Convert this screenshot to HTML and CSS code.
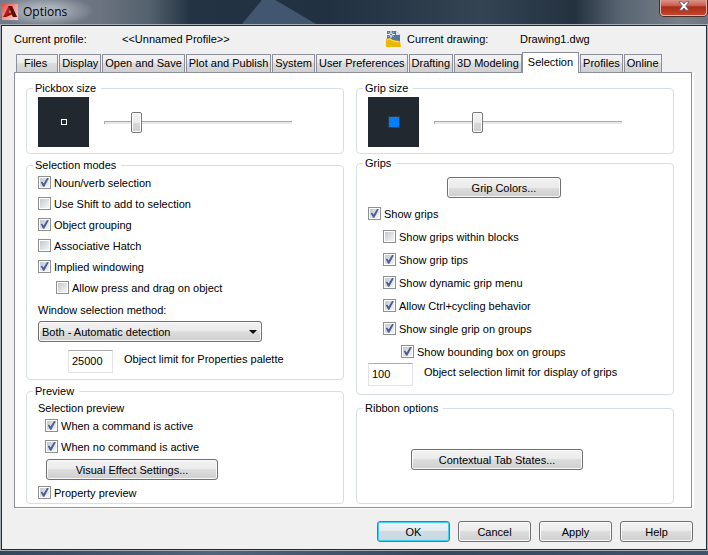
FILE: index.html
```html
<!DOCTYPE html>
<html lang="en">
<head>
<meta charset="utf-8">
<title>Options</title>
<link rel="stylesheet" href="styles.css">
</head>
<body>
<div class="window">
  <header class="titlebar">
    <svg class="logo" viewBox="0 0 16 16" aria-hidden="true">
      <defs><linearGradient id="lg" x1="0" y1="0" x2="1" y2="1"><stop offset="0" stop-color="#e04a44"/><stop offset=".5" stop-color="#f29a94"/><stop offset="1" stop-color="#f8d0cc"/></linearGradient></defs>
      <rect width="16" height="16" fill="url(#lg)"/>
      <path d="M1 13 6.500 2H10L15 13h-4l-1-2.500H5.500L4 13z" fill="#b0201a"/>
      <path d="M6.500 2H10L15 13h-4L8 6z" fill="#5c100c"/>
      <path d="M6.800 8.500 8 6l1 2.500z" fill="#e8a09a"/>
      <path d="M1 13l6-4 3 1.500L4 13z" fill="#8c1812"/>
    </svg>
    <h1>Options</h1>
    <button class="close" aria-label="Close"><svg viewBox="0 0 12 10" aria-hidden="true"><path d="M1 .8h3.200L6 3 7.800.8H11L7.800 5 11 9.200H7.800L6 7 4.200 9.200H1L4.200 5z" fill="#fff" stroke="#535666" stroke-width=".8"/></svg></button>
  </header>
  <main class="client">
    <div class="info">
      <span class="info-label">Current profile:</span>
      <span class="info-profile">&lt;&lt;Unnamed Profile&gt;&gt;</span>
      <svg class="dwg" viewBox="0 0 16 16" aria-hidden="true">
        <path d="M1 0h9l4 4v10H1z" fill="#56749c"/>
        <path d="M10 0l4 4h-4z" fill="#d7e2ee"/>
        <path d="M2 1l6 5M8 1L2 6" stroke="#b8c8dc" stroke-width=".8"/>
        <path d="M5 0v7M1 3.500h8" stroke="#fff"/>
        <circle cx="5" cy="3.500" r="1.200" fill="#2c4468" stroke="#fff" stroke-width=".8"/>
        <path d="M0 8l4-1 3 2 7 1 1 6H0z" fill="#e8b90c"/>
        <path d="M1 9l3-1 3 2 6 1" stroke="#ffe36a" fill="none"/>
      </svg>
      <span class="info-drawing">Current drawing:</span>
      <span>Drawing1.dwg</span>
    </div>
    <div class="tabs" role="tablist">
      <button role="tab" class="tab wide">Files</button>
      <button role="tab" class="tab">Display</button>
      <button role="tab" class="tab">Open and Save</button>
      <button role="tab" class="tab">Plot and Publish</button>
      <button role="tab" class="tab">System</button>
      <button role="tab" class="tab">User Preferences</button>
      <button role="tab" class="tab">Drafting</button>
      <button role="tab" class="tab">3D Modeling</button>
      <button role="tab" class="tab active" aria-selected="true">Selection</button>
      <button role="tab" class="tab">Profiles</button>
      <button role="tab" class="tab">Online</button>
    </div>
    <section class="panel" role="tabpanel">
      <div class="column">
        <fieldset>
          <legend>Pickbox size</legend>
          <div class="sizer">
            <div class="swatch"><i class="pickbox"></i></div>
            <input type="range" min="0" max="100" value="15" aria-label="Pickbox size">
          </div>
        </fieldset>
        <fieldset class="modes">
          <legend>Selection modes</legend>
          <label class="check"><input type="checkbox" checked>Noun/verb selection</label>
          <label class="check"><input type="checkbox">Use Shift to add to selection</label>
          <label class="check"><input type="checkbox" checked>Object grouping</label>
          <label class="check"><input type="checkbox">Associative Hatch</label>
          <label class="check"><input type="checkbox" checked>Implied windowing</label>
          <label class="check indent-2"><input type="checkbox">Allow press and drag on object</label>
          <label class="caption" for="method">Window selection method:</label>
          <div class="combo"><select id="method"><option>Both - Automatic detection</option></select></div>
          <div class="field indent-3"><input type="text" id="limit" value="25000"><label for="limit">Object limit for Properties palette</label></div>
        </fieldset>
        <fieldset class="preview">
          <legend>Preview</legend>
          <div class="caption">Selection preview</div>
          <label class="check indent-1"><input type="checkbox" checked>When a command is active</label>
          <label class="check indent-1"><input type="checkbox" checked>When no command is active</label>
          <button class="btn long effects">Visual Effect Settings...</button>
          <label class="check"><input type="checkbox" checked>Property preview</label>
        </fieldset>
      </div>
      <div class="column">
        <fieldset>
          <legend>Grip size</legend>
          <div class="sizer">
            <div class="swatch"><i class="grip"></i></div>
            <input type="range" min="0" max="100" value="21" aria-label="Grip size">
          </div>
        </fieldset>
        <fieldset class="grips">
          <legend>Grips</legend>
          <button class="btn medium">Grip Colors...</button>
          <label class="check"><input type="checkbox" checked>Show grips</label>
          <label class="check indent-2"><input type="checkbox">Show grips within blocks</label>
          <label class="check indent-2"><input type="checkbox" checked>Show grip tips</label>
          <label class="check indent-2"><input type="checkbox" checked>Show dynamic grip menu</label>
          <label class="check indent-2"><input type="checkbox" checked>Allow Ctrl+cycling behavior</label>
          <label class="check indent-2"><input type="checkbox" checked>Show single grip on groups</label>
          <label class="check indent-4"><input type="checkbox" checked>Show bounding box on groups</label>
          <div class="field"><input type="text" id="griplimit" value="100"><label for="griplimit">Object selection limit for display of grips</label></div>
        </fieldset>
        <fieldset class="ribbon">
          <legend>Ribbon options</legend>
          <button class="btn long">Contextual Tab States...</button>
        </fieldset>
      </div>
    </section>
    <footer class="actions">
      <button class="btn default">OK</button>
      <button class="btn">Cancel</button>
      <button class="btn">Apply</button>
      <button class="btn">Help</button>
    </footer>
  </main>
</div>
</body>
</html>
```
FILE: styles.css
```css
* { box-sizing: border-box; }
body {
  margin: 0;
  font: 11px/14px "Liberation Sans", Arial, sans-serif;
  color: #000;
}
button, input, select { font: inherit; color: inherit; margin: 0; }
.window {
  min-height: 100vh;
  padding: 0 1px 5px;
  background: linear-gradient(90deg, #33475b, #526579 30%, #34495f 60%, #3f5468);
}
.titlebar {
  position: relative;
  display: flex;
  align-items: center;
  height: 24px;
  margin: 0 -1px;
  padding: 0 2px;
  background:
    radial-gradient(ellipse 50px 16px at 44px 11px, #aab2bb 30%, #aab2bb00),
    linear-gradient(90deg, #727a86, #6b7480 100px, #53606d 150px, #243343 190px, #223141 330px, #2d3d4c 430px, #344452 480px, #243240 575px, #586471 620px, #78808a 680px, #6d7781);
}
.titlebar::before {
  content: "";
  position: absolute;
  left: 242px;
  top: 0;
  width: 74px;
  height: 24px;
  background: #42576f;
  clip-path: polygon(0 100%, 27% 0, 45% 0, 100% 100%);
}
.logo { width: 16px; height: 16px; }
h1 { margin: 0 auto 0 5px; font: 12px/16px "Open Sans", "Noto Sans", sans-serif; }
.close {
  align-self: flex-start;
  display: flex;
  justify-content: center;
  align-items: center;
  width: 47px;
  height: 16px;
  margin-right: -1px;
  padding: 0 0 4px;
  border: 1px solid #e3b4ac;
  border-top: 0;
  border-radius: 0 0 4px 4px;
  background: linear-gradient(#d99488, #c9594a 40%, #a92b16 45%, #c4452e);
  box-shadow: 0 0 0 1px #4b2b2b;
}
.close svg { width: 12px; height: 10px; }
.client {
  border: 1px solid #1f2b36;
  background: #f0f0f0;
  box-shadow: 0 0 0 1px #a5adb5;
  margin-top: 1px;
  padding: 4px 14px 7px 12px;
}
.info { display: flex; align-items: center; height: 16px; margin-top: 1px; }
.info-label { width: 108px; }
.info-profile { width: 264px; }
.dwg { width: 16px; height: 16px; margin-right: 5px; }
.info-drawing { width: 113px; }
.tabs { display: flex; align-items: flex-end; height: 25px; padding-left: 2px; }
.tab {
  height: 18px;
  padding: 0 2px 1px;
  border: 1px solid #8c8e9a;
  border-bottom: 0;
  white-space: nowrap;
  background: linear-gradient(#f2f2f2, #ebebeb 50%, #dcdcdc 50%, #d0d0d0);
}
.tab + .tab { margin-left: 1px; }
.tab.wide { padding: 0 10px 1px 7px; }
.tab + .tab.active { height: 21px; margin: 0 0 -1px; padding: 0 5px 3px; background: #fff; z-index: 1; }
.panel {
  display: grid;
  grid-template-columns: 1fr 1fr;
  gap: 12px;
  padding: 9px 17px 3px 11px;
  border: 1px solid #8c8e9a;
  background: #fff;
  box-shadow: 2px 1px 0 #fff;
}
.column { display: flex; flex-direction: column; gap: 5px; min-width: 0; }
fieldset {
  min-width: 0;
  margin: 0;
  padding: 0 11px;
  border: 1px solid #d5dfe5;
  border-radius: 4px;
}
legend { margin-left: -5px; padding: 0 5px 0 2px; line-height: 13px; }
.sizer { display: flex; align-items: center; gap: 15px; padding: 2px 0 6px; }
.swatch {
  display: grid;
  place-items: center;
  width: 51px;
  height: 50px;
  background: #212830;
}
.pickbox { width: 6px; height: 6px; border: 1px solid #fff; }
.grip { width: 12px; height: 12px; border: 1px solid #303840; background: #007fff; }
input[type="range"] { appearance: none; width: 188px; height: 22px; background: none; }
input[type="range"]::-webkit-slider-runnable-track {
  height: 3px;
  border: solid #aaa;
  border-width: 1px 0 0 1px;
  background: #e7eaea;
}
input[type="range"]::-webkit-slider-thumb {
  appearance: none;
  width: 11px;
  height: 21px;
  margin-top: -10px;
  border: 1px solid #777;
  border-radius: 2px;
  background: linear-gradient(#f4f4f4, #ececec 50%, #d8d8d8 50%, #d0d0d0);
  box-shadow: inset 0 0 0 1px #fff;
}
.check { display: flex; align-items: center; gap: 3px; height: 21px; }
input[type="checkbox"] {
  appearance: none;
  flex: none;
  display: grid;
  place-items: center;
  width: 13px;
  height: 13px;
  padding: 1px;
  border: 1px solid #8e8f8f;
  background: linear-gradient(135deg, #c4c9d0, #f6f6f6) content-box;
}
input[type="checkbox"]:checked::before {
  content: "";
  width: 9px;
  height: 9px;
  background: #4a5f97;
  clip-path: polygon(8% 48%, 24% 40%, 40% 62%, 78% 0, 98% 4%, 48% 98%, 34% 98%);
}
.indent-1 { margin-left: 7px; }
.indent-2 { margin-left: 18px; }
.indent-3 { margin-left: 30px; }
.indent-4 { margin-left: 33px; }
.caption { display: block; padding-top: 5px; }
.combo { position: relative; width: 224px; margin-top: 4px; }
.combo::after {
  content: "";
  position: absolute;
  right: 5px;
  top: 9px;
  border: 4px solid #0000;
  border-top-color: #000;
  border-bottom: 0;
}
.btn, select {
  height: 21px;
  border: 1px solid #707070;
  border-radius: 3px;
  background: linear-gradient(#f2f2f2, #ebebeb 50%, #dddddd 50%, #cfcfcf);
  box-shadow: inset 0 0 0 1px #fafafa;
}
select { appearance: none; display: block; width: 100%; padding: 0 3px; }
.field { display: flex; gap: 11px; height: 23px; }
.field label { padding-top: 2px; }
.field input {
  width: 45px;
  height: 23px;
  padding: 0 3px 2px;
  border: 1px solid #e2e3ea;
  border-top-color: #abadb3;
  background: #fff;
}
.modes { padding-bottom: 6px; }
.modes .field { margin-top: 8px; }
.preview .caption { padding-top: 3px; }
.btn { display: block; width: 73px; padding: 0; }
.btn.long { width: 172px; }
.btn.medium { width: 114px; margin: 7px 0 4px 79px; }
.effects { margin: 2px 0 2px 8px; }
.grips { margin-top: -2px; padding-bottom: 8px; }
.grips .check { height: 23px; }
.grips .indent-2 { margin-left: 15px; }
.ribbon { flex: 1; margin-top: 2px; }
.ribbon .btn { margin: 34px 0 0 43px; }
.actions { display: flex; justify-content: flex-end; gap: 8px; margin-right: -1px; padding-top: 13px; }
.btn.default {
  border-color: #3c7fb1;
  background: linear-gradient(#eef3f6, #e3ebf0 50%, #cfdce4 50%, #c8d8e2);
  box-shadow: inset 0 0 0 1px #3fd0f5;
}
```
